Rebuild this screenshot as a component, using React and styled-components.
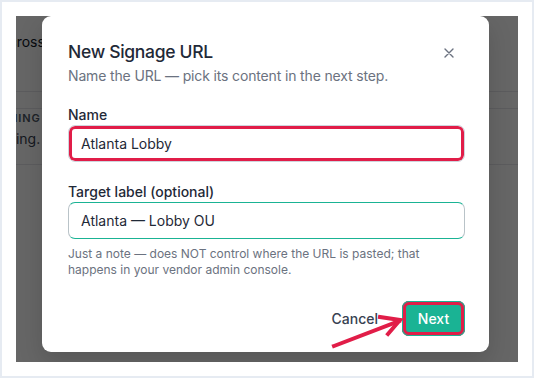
import styled, { createGlobalStyle } from "styled-components";

const GlobalStyle = createGlobalStyle`
  body {
    margin: 0;
    background: #ffffff;
    font-family: Inter, "Noto Sans", "Liberation Sans", sans-serif;
    -webkit-font-smoothing: antialiased;
  }
`;

const Frame = styled.div`
  width: 534px;
  height: 378px;
  box-sizing: border-box;
  border: 2px solid #e6ebf2;
  padding: 14px;
  background: #ffffff;
`;

const Stage = styled.div`
  position: relative;
  width: 502px;
  height: 346px;
  overflow: hidden;
  background: #ffffff;
`;

/* page content that sits behind the dialog */
const BgPage = styled.div`
  display: flex;
  flex-direction: column;
  color: #111827;
`;

const BgRow = styled.div`
  display: flex;
  flex-direction: column;
  gap: ${(p) => p.$gap || 0}px;
  height: ${(p) => p.$height}px;
  box-sizing: border-box;
  padding-top: ${(p) => p.$pad || 0}px;
  border-bottom: 1px solid #e5e7eb;
`;

const BgText = styled.div`
  margin-left: ${(p) => p.$shift}px;
  white-space: nowrap;
  font-size: ${(p) => p.$size || 14}px;
  line-height: ${(p) => p.$line || 20}px;
  font-weight: ${(p) => p.$weight || 400};
  letter-spacing: ${(p) => p.$spacing || 0}em;
  color: ${(p) => p.$color || "#111827"};
`;

const Overlay = styled.div`
  position: absolute;
  inset: 0;
  background: rgba(0, 0, 0, 0.6);
  display: flex;
  align-items: flex-start;
  padding-left: 26px;
`;

const Modal = styled.div`
  width: 447px;
  height: 336px;
  box-sizing: border-box;
  background: #ffffff;
  border-radius: 9px;
  padding: 22px 24px 16px 26px;
  display: flex;
  flex-direction: column;
  box-shadow: 0 10px 25px rgba(0, 0, 0, 0.15);
`;

const Header = styled.div`
  display: flex;
  justify-content: space-between;
  align-items: flex-start;
`;

const Title = styled.h2`
  margin: 0;
  font-size: 17.5px;
  line-height: 28px;
  font-weight: 500;
  letter-spacing: -0.3px;
  color: #1f2937;
`;

const CloseButton = styled.button`
  width: 16px;
  height: 16px;
  margin: 7px 8px 0 0;
  padding: 0;
  border: none;
  background: none;
  display: flex;
  align-items: center;
  justify-content: center;
  color: #6b7280;
`;

const Subtitle = styled.p`
  margin: 0;
  font-size: 14px;
  line-height: 20px;
  letter-spacing: -0.15px;
  color: #6b7280;
`;

const Field = styled.div`
  display: flex;
  flex-direction: column;
  margin-top: ${(p) => p.$top}px;
`;

const Label = styled.label`
  font-size: 14px;
  line-height: 18px;
  font-weight: 500;
  color: #1f2937;
  margin-bottom: 1px;
`;

const Input = styled.input`
  height: 37px;
  box-sizing: border-box;
  padding: 0 12px;
  border: 1px solid #cfd5dd;
  border-color: ${(p) => (p.$focused ? "#1ab394 #b9c3c8" : "#cfd5dd")};
  border-radius: 7px;
  font-family: inherit;
  font-size: 14px;
  color: #1f2937;
  background: #ffffff;
  outline: none;
  box-shadow: ${(p) => (p.$marked ? "inset 0 0 0 3px #e11d48" : "none")};
`;

const Help = styled.p`
  margin: 7px 0 0;
  font-size: 12px;
  line-height: 15.5px;
  color: #6b7280;
`;

const Footer = styled.div`
  margin-top: auto;
  display: flex;
  justify-content: flex-end;
  align-items: center;
  gap: 24px;
`;

const TextButton = styled.button`
  padding: 0;
  border: none;
  background: none;
  font-family: inherit;
  font-size: 14px;
  font-weight: 500;
  color: #374151;
`;

const PrimaryButton = styled.button`
  width: 63px;
  height: 35px;
  border: none;
  border-radius: 7px;
  background: #1ab394;
  font-family: inherit;
  font-size: 14px;
  font-weight: 500;
  color: #ffffff;
  box-shadow: inset 0 0 0 1px #1ab394, inset 0 0 0 4px #e11d48;
`;

const Annotation = styled.svg`
  position: absolute;
  left: 0;
  top: 0;
  pointer-events: none;
`;

export default function App() {
  return (
    <>
      <GlobalStyle />
      <Frame>
        <Stage>
          <BgPage>
            <BgRow $height={76} $pad={16}>
              <BgText $shift={-135}>Show one playlist across screens</BgText>
            </BgRow>
            <BgRow $height={17} />
            <BgRow $height={56} $pad={2} $gap={4}>
              <BgText $shift={-44} $size={11} $line={14} $weight={600} $spacing={0.08} $color="#4b5563">
                UPCOMING
              </BgText>
              <BgText $shift={-33} $color="#374151">
                Loading.
              </BgText>
            </BgRow>
          </BgPage>

          <Overlay>
            <Modal>
              <Header>
                <Title>New Signage URL</Title>
                <CloseButton aria-label="Close">
                  <svg width="10" height="10" viewBox="0 0 10 10">
                    <path d="M1 1L9 9M9 1L1 9" stroke="currentColor" strokeWidth="1.4" strokeLinecap="round" />
                  </svg>
                </CloseButton>
              </Header>
              <Subtitle>Name the URL — pick its content in the next step.</Subtitle>

              <Field $top={20}>
                <Label>Name</Label>
                <Input $marked defaultValue="Atlanta Lobby" />
              </Field>

              <Field $top={21}>
                <Label>Target label (optional)</Label>
                <Input $focused defaultValue="Atlanta — Lobby OU" />
              </Field>

              <Help>
                Just a note — does NOT control where the URL is pasted; that
                happens in your vendor admin console.
              </Help>

              <Footer>
                <TextButton>Cancel</TextButton>
                <PrimaryButton>Next</PrimaryButton>
              </Footer>
            </Modal>
          </Overlay>

          <Annotation width="502" height="346">
            <g stroke="#e11d48" strokeWidth="4" fill="none" strokeLinecap="square">
              <path d="M318 330L383 305" />
              <path d="M364 301L384 304L372 318" />
            </g>
          </Annotation>
        </Stage>
      </Frame>
    </>
  );
}
